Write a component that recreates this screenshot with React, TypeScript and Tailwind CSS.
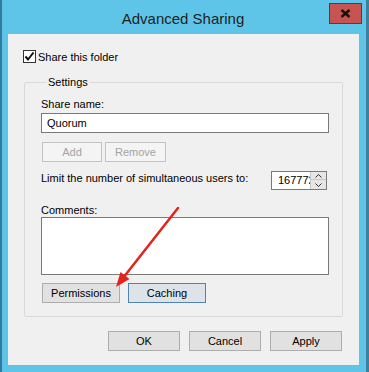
import React from "react";

const font = { fontFamily: '"Liberation Sans", Arial, sans-serif' };

function Btn({
  children,
  disabled,
  focused,
  className = "",
}: {
  children: React.ReactNode;
  disabled?: boolean;
  focused?: boolean;
  className?: string;
}) {
  const look = disabled
    ? "border-[#c4c4c4] bg-[#f4f4f4] text-[#a3a3a3]"
    : focused
    ? "border-[#4f83b4] bg-[#dde3e8] text-black"
    : "border-[#adadad] bg-[#e1e1e1] text-black";
  return (
    <button
      className={`h-[20px] border flex items-center justify-center text-[11px] leading-none ${look} ${className}`}
    >
      {children}
    </button>
  );
}

export default function App() {
  return (
    <div
      className="relative w-[369px] h-[372px] bg-[#5fc5e8] border-l-2 border-r-[3px] border-l-[#2f7c9c] border-r-[#3f7f99] overflow-hidden"
      style={font}
    >
      {/* title bar */}
      <div className="relative h-[34px] flex items-center justify-center">
        <span className="text-[15px] text-[#1e1e1e] mt-[4px] -ml-[2px]">Advanced Sharing</span>
        <div className="absolute right-[4px] top-[3px] w-[33px] h-[21px] bg-[#c75450] border border-[#5a3a3a] flex items-center justify-center">
          <svg width="11" height="9" viewBox="0 0 11 9">
            <path d="M1.5 1 L9.5 8 M9.5 1 L1.5 8" stroke="#111" strokeWidth="2.4" />
          </svg>
        </div>
      </div>

      {/* client area */}
      <div className="ml-[6px] w-[351px] h-[331px] bg-[#f0f0f0] text-[11px] text-black">
        <div className="pt-[16px] pl-[15px] flex items-center h-[29px]">
          <div className="w-[13px] h-[13px] border border-[#333] bg-white flex items-center justify-center">
            <svg width="11" height="11" viewBox="0 0 11 11">
              <path d="M1.5 5.5 L4 8.5 L9.5 1.5" stroke="#111" strokeWidth="2" fill="none" />
            </svg>
          </div>
          <span className="ml-[2px] leading-[16px]">Share this folder</span>
        </div>

        <fieldset className="ml-[16px] mt-[11px] w-[319px] border border-[#d9d9d9] rounded-[2px] pl-[16px] pb-[13px]">
          <legend className="ml-[5px] px-[2px] leading-[16px]">Settings</legend>
          <div className="mt-[6px] leading-[16px]">Share name:</div>
          <div className="mt-[1px] w-[288px] h-[20px] border border-[#7a7a7a] bg-white flex items-center pl-[5px]">
            Quorum
          </div>
          <div className="mt-[9px] flex gap-[3px] pl-[1px]">
            <Btn disabled className="w-[60px]">Add</Btn>
            <Btn disabled className="w-[61px]">Remove</Btn>
          </div>
          <div className="mt-[9px] w-[288px] flex items-start">
            <span className="leading-[16px] -mt-[1px] whitespace-nowrap">Limit the number of simultaneous users to:</span>
            <div className="ml-auto mr-[2px] h-[19px] flex border border-[#7a7a7a] bg-white">
              <div className="w-[38px] overflow-hidden whitespace-nowrap pl-[6px] leading-[17px]">16777216</div>
              <div className="w-[16px] flex flex-col bg-[#e6e6e6] border-l border-[#c8c8c8]">
                <div className="h-[8px] flex items-center justify-center border-b border-[#c8c8c8]">
                  <svg width="7" height="4" viewBox="0 0 7 4">
                    <path d="M0.5 3.5 L3.5 0.5 L6.5 3.5" stroke="#333" strokeWidth="1" fill="none" />
                  </svg>
                </div>
                <div className="flex-1 flex items-center justify-center">
                  <svg width="7" height="4" viewBox="0 0 7 4">
                    <path d="M0.5 0.5 L3.5 3.5 L6.5 0.5" stroke="#333" strokeWidth="1" fill="none" />
                  </svg>
                </div>
              </div>
            </div>
          </div>
          <div className="mt-[13px] leading-[14px]">Comments:</div>
          <div className="w-[288px] h-[58px] border border-[#7a7a7a] bg-white" />
          <div className="mt-[8px] flex gap-[8px] pl-[1px]">
            <Btn className="w-[78px]">Permissions</Btn>
            <Btn focused className="w-[78px]">Caching</Btn>
          </div>
        </fieldset>

        <div className="mt-[14px] flex justify-end gap-[9px] pr-[17px]">
          <Btn className="w-[72px]">OK</Btn>
          <Btn className="w-[72px]">Cancel</Btn>
          <Btn className="w-[72px]">Apply</Btn>
        </div>
      </div>

      {/* annotation arrow */}
      <svg className="absolute left-0 top-0 pointer-events-none" width="369" height="372" viewBox="0 0 369 372">
        <line x1="176" y1="208" x2="121" y2="278" stroke="#e3231c" strokeWidth="2.5" strokeLinecap="round" />
        <polygon points="114,287 127.5,279 118.5,272" fill="#e3231c" />
      </svg>
    </div>
  );
}
